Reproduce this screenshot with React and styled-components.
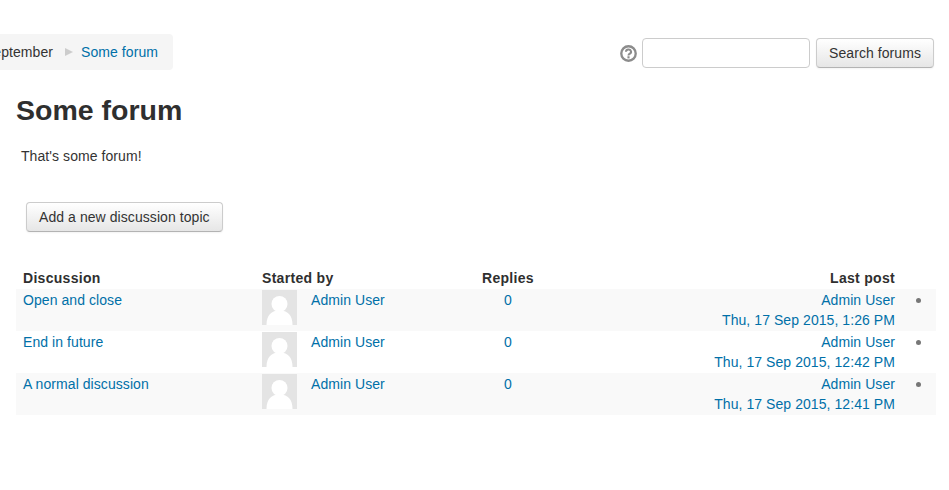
import React from "react";
import styled, { createGlobalStyle } from "styled-components";

const Global = createGlobalStyle`
  html, body { margin: 0; padding: 0; background: #fff; }
  body { width: 949px; height: 490px; overflow: hidden; font-family: "Liberation Sans", Arial, sans-serif; font-size: 14px; letter-spacing: 0.07px; color: #333; }
`;
const Page = styled.div`width: 949px; height: 490px; overflow: hidden; display: flex; flex-direction: column;`;
const Bar = styled.div`display: flex; justify-content: space-between; align-items: flex-start; padding: 34px 15px 0 0; height: 36px;`;
const Crumbs = styled.nav`height: 36px; box-sizing: border-box; width: 173px; background: #f5f5f5; border-radius: 0 4px 4px 0; display: flex; align-items: center; justify-content: flex-end; padding-right: 15px; white-space: nowrap; overflow: hidden; line-height: 20px;`;
const Sep = styled.span`flex: none; width: 0; height: 0; border-style: solid; border-width: 4px 0 4px 8px; border-color: transparent transparent transparent #ccc; margin: 0 8px 0 12px;`;
const A = styled.a`color: #0070a8; text-decoration: none;`;
const SearchForm = styled.form`display: flex; align-items: center; margin-top: 4px;`;
const Help = styled.svg`width: 17px; height: 17px; margin-right: 5px; display: block;`;
const Input = styled.input`width: 168px; height: 30px; box-sizing: border-box; border: 1px solid #ccc; border-radius: 4px; margin-right: 6px; background: #fff;`;
const Btn = styled.button`font: inherit; letter-spacing: inherit; color: #333; height: 30px; padding: 0 12px; border: 1px solid #ccc; border-bottom-color: #b3b3b3; border-radius: 4px; background: linear-gradient(#fff, #e6e6e6); box-shadow: 0 1px 2px rgba(0,0,0,.05); white-space: nowrap;`;
const Main = styled.main`padding: 0 13px 0 16px;`;
const Title = styled.h2`font: bold 28.5px/40px "Liberation Sans", Arial, sans-serif; letter-spacing: 0; color: #2f2f2f; margin: 20px 0 0;`;
const Intro = styled.p`margin: 16px 0 0 5px; line-height: 20px;`;
const AddWrap = styled.div`margin: 36px 0 0 10px;`;
const Table = styled.div`margin-top: 36px; width: 920px;`;
const Row = styled.div`display: grid; grid-template-columns: 246px 220px 116px 297px 41px; background: ${p => p.$shaded ? "#f9f9f9" : "transparent"}; height: ${p => p.$head ? "21px" : "42px"}; line-height: 20px; ${p => p.$head ? "font-weight:700;color:#2f2f2f;letter-spacing:.3px;" : "padding-top:1px;box-sizing:border-box;"}`;
const Cell = styled.div`padding-left: ${p => p.$pl ?? 7}px; text-align: ${p => p.$right ? "right" : "left"}; white-space: nowrap;`;
const Starter = styled.div`display: flex; gap: 14px;`;
const Avatar = styled.svg`width: 35px; height: 35px; display: block; flex: none;`;
const Dot = styled.span`display: block; width: 5px; height: 5px; border-radius: 50%; background: #777; margin: 8px 0 0 14px;`;

const rows = [
  ["Open and close", "Thu, 17 Sep 2015, 1:26 PM"],
  ["End in future", "Thu, 17 Sep 2015, 12:42 PM"],
  ["A normal discussion", "Thu, 17 Sep 2015, 12:41 PM"],
];

export default function App() {
  return (
    <Page>
      <Global />
      <Bar>
        <Crumbs><span>September</span><Sep /><A href="#">Some forum</A></Crumbs>
        <SearchForm onSubmit={e => e.preventDefault()}>
          <Help viewBox="0 0 16 16"><circle cx="8" cy="8" r="6.8" fill="none" stroke="#8c8c8c" strokeWidth="2.2" /><path d="M5.6 6.3a2.4 2.1 0 1 1 3.5 1.9c-.8.5-1.1.8-1.1 1.6" fill="none" stroke="#8c8c8c" strokeWidth="1.9" /><rect x="7" y="10.6" width="2" height="2" fill="#8c8c8c" /></Help>
          <Input />
          <Btn type="button">Search forums</Btn>
        </SearchForm>
      </Bar>
      <Main>
        <Title>Some forum</Title>
        <Intro>That's some forum!</Intro>
        <AddWrap><Btn type="button">Add a new discussion topic</Btn></AddWrap>
        <Table>
          <Row $head>
            <Cell>Discussion</Cell><Cell $pl={0}>Started by</Cell><Cell $pl={0}>Replies</Cell><Cell $right>Last post</Cell><Cell />
          </Row>
          {rows.map(([t, d], i) => (
            <Row key={t} $shaded={i % 2 === 0}>
              <Cell><A href="#">{t}</A></Cell>
              <Cell $pl={0}><Starter>
                <Avatar viewBox="0 0 35 35"><rect width="35" height="35" fill="#e4e4e4" /><circle cx="17.5" cy="14" r="8" fill="#fff" /><path d="M4.5 35c0-10 5-14.500 13-14.500s13 4.500 13 14.500z" fill="#fff" /></Avatar>
                <A href="#">Admin User</A>
              </Starter></Cell>
              <Cell $pl={22}><A href="#">0</A></Cell>
              <Cell $right><A href="#">Admin User</A><br /><A href="#">{d}</A></Cell>
              <Cell><Dot /></Cell>
            </Row>
          ))}
        </Table>
      </Main>
    </Page>
  );
}
